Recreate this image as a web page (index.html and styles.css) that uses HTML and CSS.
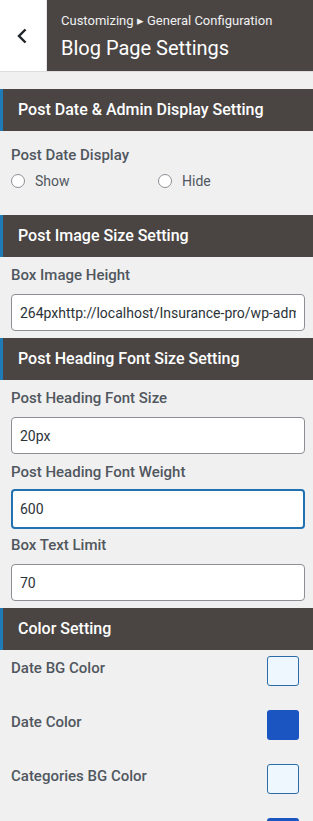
FILE: index.html
```html
<!DOCTYPE html>
<html lang="en">

<head>
    <meta charset="UTF-8">
    <meta name="viewport" content="width=device-width, initial-scale=1.0">
    <title>Blog Page Settings</title>
    <link rel="stylesheet" href="styles.css">
</head>

<body>
    <div class="panel-header">
        <button class="back-btn" aria-label="Back">
            <svg width="14" height="20" viewBox="0 0 14 20">
                <polyline points="10.5,3.5 4,10 10.5,16.5" fill="none" stroke="#1d2327" stroke-width="2.4" />
            </svg>
        </button>
        <div class="panel-title">
            <span class="crumb">Customizing &#9656; General Configuration</span>
            <h1>Blog Page Settings</h1>
        </div>
    </div>

    <div class="section-title first">Post Date &amp; Admin Display Setting</div>
    <div class="control radio-control">
        <label class="control-label">Post Date Display</label>
        <div class="radios">
            <label class="radio"><input type="radio" name="postdate"> Show</label>
            <label class="radio"><input type="radio" name="postdate"> Hide</label>
        </div>
    </div>

    <div class="section-title">Post Image Size Setting</div>
    <div class="control">
        <label class="control-label" for="imgheight">Box Image Height</label>
        <input type="text" id="imgheight" class="text-input" value="264pxhttp://localhost/Insurance-pro/wp-admin/customize.php">
    </div>

    <div class="section-title">Post Heading Font Size Setting</div>
    <div class="control">
        <label class="control-label" for="fontsize">Post Heading Font Size</label>
        <input type="text" id="fontsize" class="text-input" value="20px">
    </div>
    <div class="control">
        <label class="control-label" for="fontweight">Post Heading Font Weight</label>
        <input type="text" id="fontweight" class="text-input focused" value="600">
    </div>
    <div class="control">
        <label class="control-label" for="textlimit">Box Text Limit</label>
        <input type="text" id="textlimit" class="text-input" value="70">
    </div>

    <div class="section-title">Color Setting</div>
    <div class="color-row">
        <span class="control-label">Date BG Color</span>
        <span class="swatch light"></span>
    </div>
    <div class="color-row">
        <span class="control-label">Date Color</span>
        <span class="swatch blue"></span>
    </div>
    <div class="color-row">
        <span class="control-label">Categories BG Color</span>
        <span class="swatch light"></span>
    </div>
    <div class="color-row">
        <span class="control-label"></span>
        <span class="swatch blue"></span>
    </div>
</body>

</html>
```

FILE: styles.css
```css
body {
    margin: 0;
    font-family: Roboto, "Liberation Sans", sans-serif;
    background-color: #f0f0f1;
    color: #50575e;
    overflow: hidden;
}

.panel-header {
    display: flex;
    height: 71px;
    border-bottom: 1px solid #dcdcde;
    margin-bottom: 17px;
}

.back-btn {
    width: 47px;
    border: none;
    border-right: 1px solid #e4e4e4;
    background-color: #fff;
    display: flex;
    align-items: center;
    justify-content: center;
    padding: 0 2px 0 0;
}

.panel-title {
    flex: 1;
    background-color: #4a4543;
    color: #fff;
    padding: 13px 14px 0;
}

.crumb {
    display: block;
    font-size: 13px;
    line-height: 16px;
    color: #f0f0f1;
}

h1 {
    margin: 7px 0 0;
    font-size: 20px;
    font-weight: 400;
    line-height: 24px;
}

.section-title {
    height: 42px;
    background-color: #4a4543;
    border-left: 3px solid #1f7ab8;
    color: #fff;
    font-size: 16px;
    font-weight: 500;
    line-height: 42px;
    padding-left: 15px;
    margin-top: 7px;
}

.section-title.first {
    margin-top: 0;
}

.control {
    padding: 8px 8px 0 11px;
}

.radio-control {
    padding-top: 14px;
    padding-bottom: 19px;
}

.control-label {
    display: block;
    font-size: 15px;
    font-weight: 500;
    line-height: 20px;
    color: #50575e;
}

.text-input {
    display: block;
    box-sizing: border-box;
    width: 100%;
    height: 37px;
    margin-top: 9px;
    padding: 0 8px;
    border: 1px solid #8c8f94;
    border-radius: 4px;
    background-color: #fff;
    font-family: Roboto, "Liberation Sans", sans-serif;
    font-size: 14px;
    color: #2c3338;
}

.text-input.focused {
    height: 40px;
    margin-top: 7px;
    border: 2px solid #2271b1;
    padding: 0 7px;
    margin-bottom: -2px;
}

.radios {
    display: flex;
    margin-top: 8px;
}

.radio {
    display: flex;
    align-items: center;
    width: 149px;
    font-size: 14px;
    color: #50575e;
}

.radio input {
    appearance: none;
    width: 14px;
    height: 14px;
    margin: 0 10px 0 0;
    border: 1px solid #8c8f94;
    border-radius: 50%;
    background-color: #fff;
}

.color-row {
    display: flex;
    justify-content: space-between;
    align-items: flex-start;
    height: 54px;
    padding: 6px 14px 0 11px;
    box-sizing: border-box;
}

.color-row .control-label {
    margin-top: 2px;
}

.swatch {
    width: 32px;
    height: 30px;
    border-radius: 3px;
    box-sizing: border-box;
}

.swatch.light {
    background-color: #eef7fd;
    border: 1px solid #2a6ba8;
}

.swatch.blue {
    background-color: #1a55c2;
}
```
